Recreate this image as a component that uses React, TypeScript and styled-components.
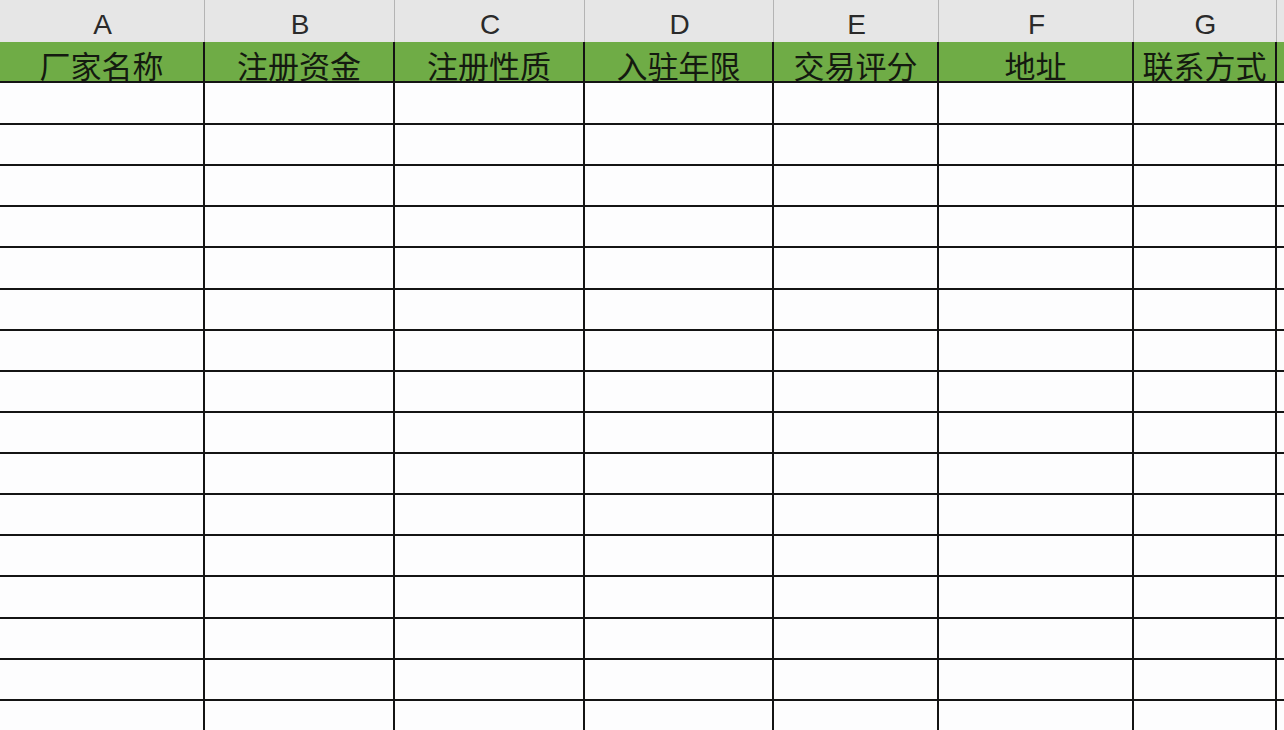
import React from "react";
import styled, { createGlobalStyle } from "styled-components";

const GlobalStyle = createGlobalStyle`
  html, body {
    margin: 0;
    padding: 0;
    background: #fdfdfe;
    overflow: hidden;
  }
`;

const COLS = "205px 190px 190px 189px 165px 195px 143px 1fr";

const Sheet = styled.div`
  width: 1284px;
  height: 730px;
  overflow: hidden;
  display: flex;
  flex-direction: column;
  background: #fdfdfe;
`;

const Row = styled.div<{ $h: number }>`
  display: grid;
  grid-template-columns: ${COLS};
  height: ${(p) => p.$h}px;
  flex: none;
`;

const LetterCell = styled.div`
  background: #e6e6e6;
  border-right: 1px solid #b4b4b4;
  display: flex;
  align-items: flex-start;
  justify-content: center;
  padding-top: 11px;
  padding-left: 1px;
  box-sizing: border-box;
  font-family: "Liberation Sans", Arial, sans-serif;
  font-size: 28px;
  line-height: 28px;
  font-weight: 400;
  color: #2a2a2a;
  &:last-child {
    border-right: none;
  }
`;

const TitleCell = styled.div`
  background: #6fac46;
  border-right: 2px solid #141414;
  border-bottom: 2px solid #141414;
  display: flex;
  align-items: flex-end;
  justify-content: center;
  padding-bottom: 1px;
  box-sizing: border-box;
  font-family: "Noto Sans CJK SC", "Noto Sans", sans-serif;
  font-size: 31px;
  line-height: 31px;
  font-weight: 400;
  color: #141a10;
  white-space: nowrap;
  &:last-child {
    border-right: none;
  }
`;

const BodyCell = styled.div`
  background: #fdfdfe;
  border-right: 2px solid #141414;
  border-bottom: 2px solid #141414;
  box-sizing: border-box;
  &:last-child {
    border-right: none;
  }
`;

const letters = ["A", "B", "C", "D", "E", "F", "G", ""];
const titles = ["厂家名称", "注册资金", "注册性质", "入驻年限", "交易评分", "地址", "联系方式", ""];
const bodyHeights = [42, ...Array.from({ length: 16 }, () => 41.14)];

export default function App() {
  return (
    <>
      <GlobalStyle />
      <Sheet>
        <Row $h={42}>
          {letters.map((l, i) => (
            <LetterCell key={i}>{l}</LetterCell>
          ))}
        </Row>
        <Row $h={41}>
          {titles.map((t, i) => (
            <TitleCell key={i}>{t}</TitleCell>
          ))}
        </Row>
        {bodyHeights.map((h, r) => (
          <Row key={r} $h={h}>
            {letters.map((_, i) => (
              <BodyCell key={i} />
            ))}
          </Row>
        ))}
      </Sheet>
    </>
  );
}
